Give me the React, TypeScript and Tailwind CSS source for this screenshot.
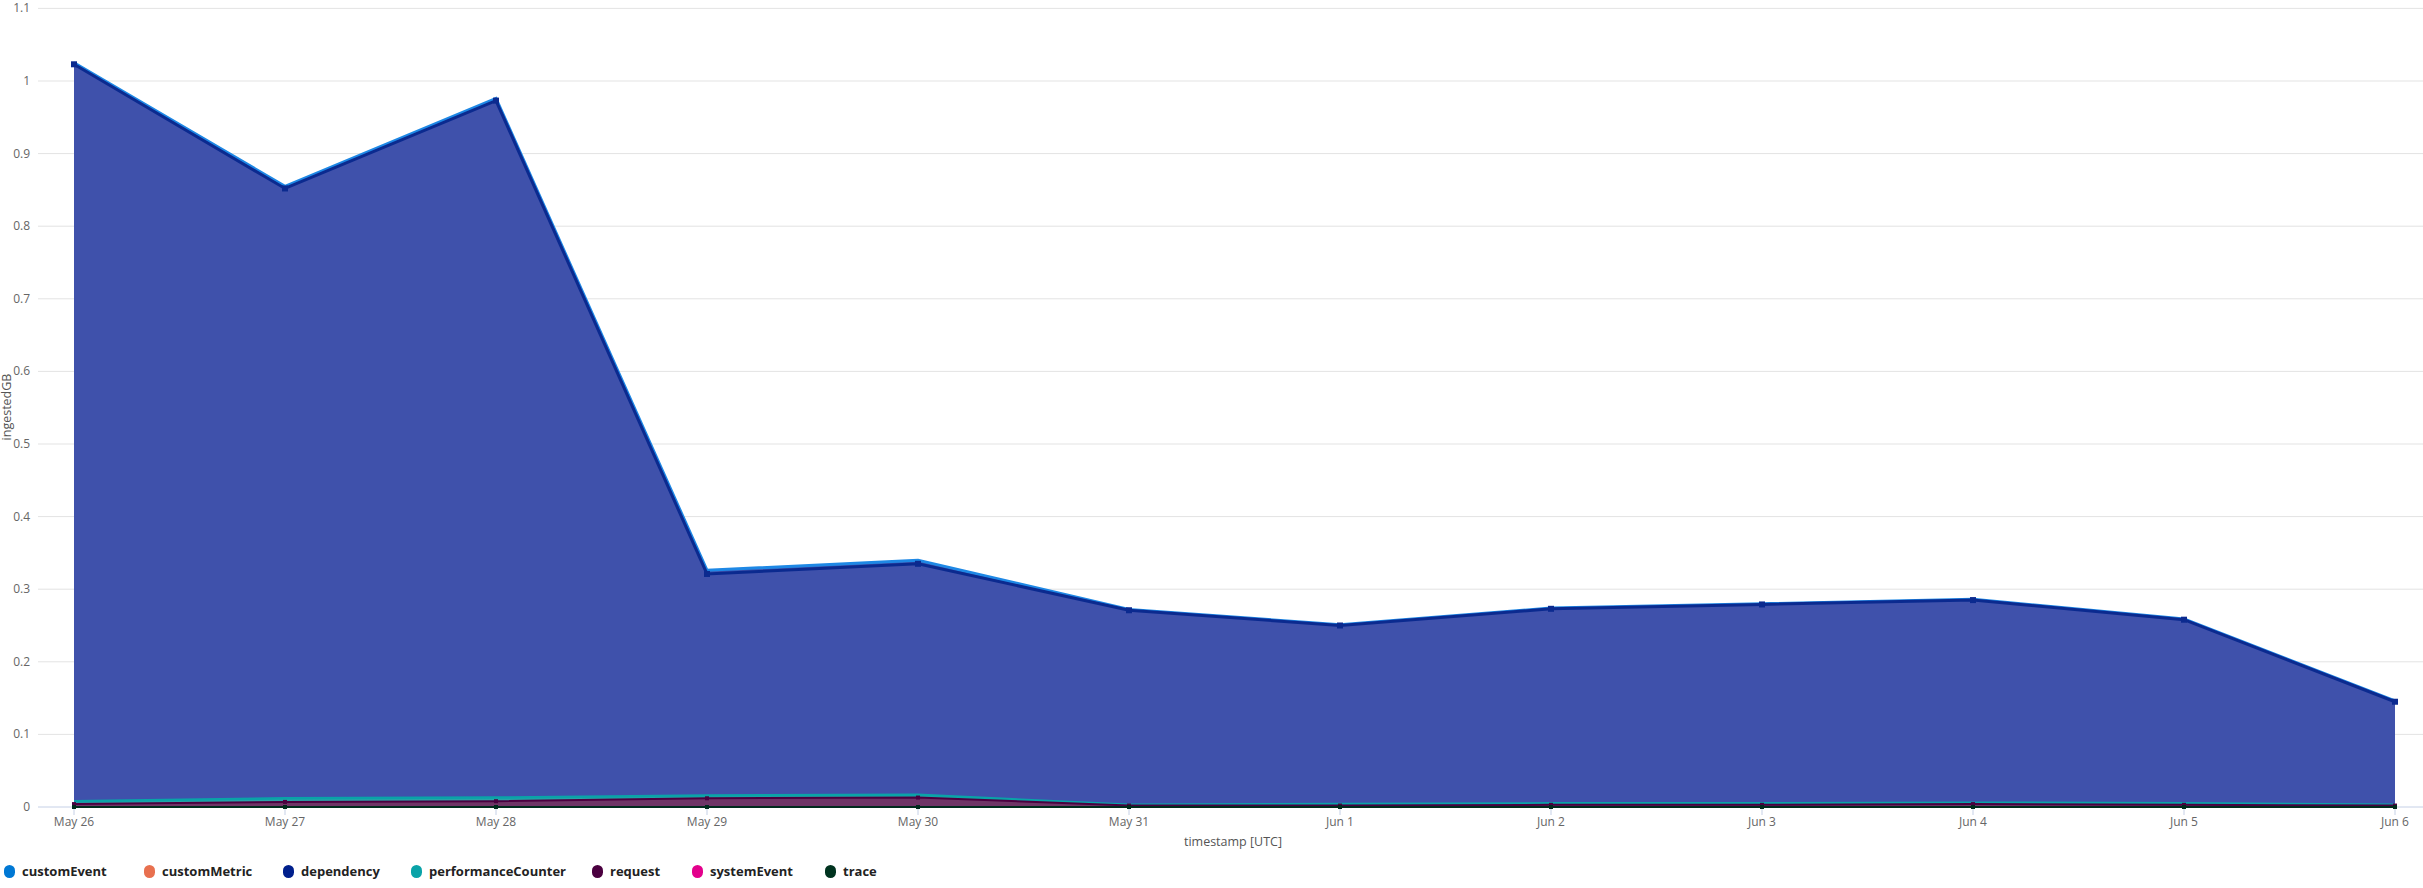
import React from "react";

const X0 = 74, STEP = 211.0, Y0 = 807, PER = 726;
const labels = ["May 26","May 27","May 28","May 29","May 30","May 31","Jun 1","Jun 2","Jun 3","Jun 4","Jun 5","Jun 6"];
const req = [0.004,0.007,0.008,0.012,0.013,0.002,0.002,0.003,0.003,0.004,0.003,0.002];
const perf = [0.004,0.005,0.005,0.004,0.004,0.001,0.002,0.002,0.002,0.002,0.002,0.001];
const dep = [1.015,0.84,0.96,0.305,0.318,0.268,0.246,0.268,0.274,0.279,0.253,0.142];
const ce = [0.002,0.003,0.003,0.005,0.005,0.001,0.001,0.001,0.001,0.001,0.001,0.001];
const x = (i: number) => X0 + i * STEP;
const y = (v: number) => Y0 - v * PER;

function cum(layers: number[][]) {
  const out: number[][] = [];
  let acc = labels.map(() => 0);
  for (const l of layers) { acc = acc.map((a, i) => a + l[i]); out.push(acc); }
  return out;
}
const [cReq, cPerf, cDep, cCe] = cum([req, perf, dep, ce]);
const line = (c: number[]) => c.map((v, i) => `${x(i)},${y(v)}`).join(" ");
const area = (top: number[], bot: number[] | null) => {
  const t = top.map((v, i) => `${x(i)},${y(v)}`);
  const b = bot ? [...bot].map((v, i) => `${x(i)},${y(v)}`).reverse() : [`${x(11)},${Y0}`, `${x(0)},${Y0}`];
  return [...t, ...b].join(" ");
};

const legend: [string, string, string][] = [
  ["customEvent", "#0078d4", "w-[140px]"],
  ["customMetric", "#e8704f", "w-[139px]"],
  ["dependency", "#001f8c", "w-[128px]"],
  ["performanceCounter", "#0aa3a8", "w-[181px]"],
  ["request", "#4b0040", "w-[100px]"],
  ["systemEvent", "#e3008c", "w-[133px]"],
  ["trace", "#00331f", "w-[80px]"],
];

export default function App() {
  const ticks = Array.from({ length: 12 }, (_, i) => i / 10);
  return (
    <div className="w-[2423px] h-[888px] bg-white overflow-hidden" style={{ fontFamily: '"Open Sans", "Noto Sans", sans-serif' }}>
      <svg width="2423" height="855" className="block">
        {ticks.map((t, i) => (
          <g key={i}>
            <line x1={38} x2={2423} y1={y(t)} y2={y(t)} stroke={i === 0 ? "#c5d0e6" : "#e3e3e3"} strokeWidth={1} />
            <text x={30} y={y(t) + 4} textAnchor="end" fontSize={12} fill="#666">{i === 0 ? "0" : i === 10 ? "1" : t.toFixed(1)}</text>
          </g>
        ))}
        <polygon points={area(cReq, null)} fill="#6e3566" />
        <polygon points={area(cPerf, cReq)} fill="#2aa3a8" />
        <polygon points={area(cCe, cPerf)} fill="#3f51ab" />
        <polyline points={line(cCe)} fill="none" stroke="#1e88e5" strokeWidth={3} />
        <polyline points={line(cDep)} fill="none" stroke="#0b2a8f" strokeWidth={3} />
        <polyline points={line(cPerf)} fill="none" stroke="#0aa3a8" strokeWidth={2.5} />
        <polyline points={line(cReq)} fill="none" stroke="#4b0040" strokeWidth={2} />
        <line x1={x(0)} x2={x(11)} y1={Y0} y2={Y0} stroke="#002b1d" strokeWidth={2} />
        {labels.map((l, i) => (
          <g key={l}>
            <line x1={x(i)} x2={x(i)} y1={Y0} y2={Y0 + 8} stroke="#c5d0e6" />
            <rect x={x(i) - 3} y={y(cDep[i]) - 3} width={6} height={6} fill="#0b2a8f" />
            <rect x={x(i) - 2} y={y(cReq[i]) - 2} width={4} height={4} fill="#4b0040" />
            <rect x={x(i) - 2} y={Y0 - 2} width={4} height={4} fill="#002b1d" />
            <text x={x(i)} y={826} textAnchor="middle" fontSize={12} fill="#666">{l}</text>
          </g>
        ))}
        <text x={1233} y={846} textAnchor="middle" fontSize={12.5} fill="#555">timestamp [UTC]</text>
        <text transform="translate(11,407) rotate(-90)" textAnchor="middle" fontSize={12.5} fill="#555">ingestedGB</text>
      </svg>
      <div className="flex items-center h-[33px] pl-[4px]">
        {legend.map(([n, c, w]) => (
          <div key={n} className={`flex items-center gap-[7px] shrink-0 ${w}`}>
            <span className="w-[11px] h-[13px] rounded-full inline-block shrink-0" style={{ background: c }} />
            <span className="text-[13px] font-bold text-[#222] whitespace-nowrap">{n}</span>
          </div>
        ))}
      </div>
    </div>
  );
}
